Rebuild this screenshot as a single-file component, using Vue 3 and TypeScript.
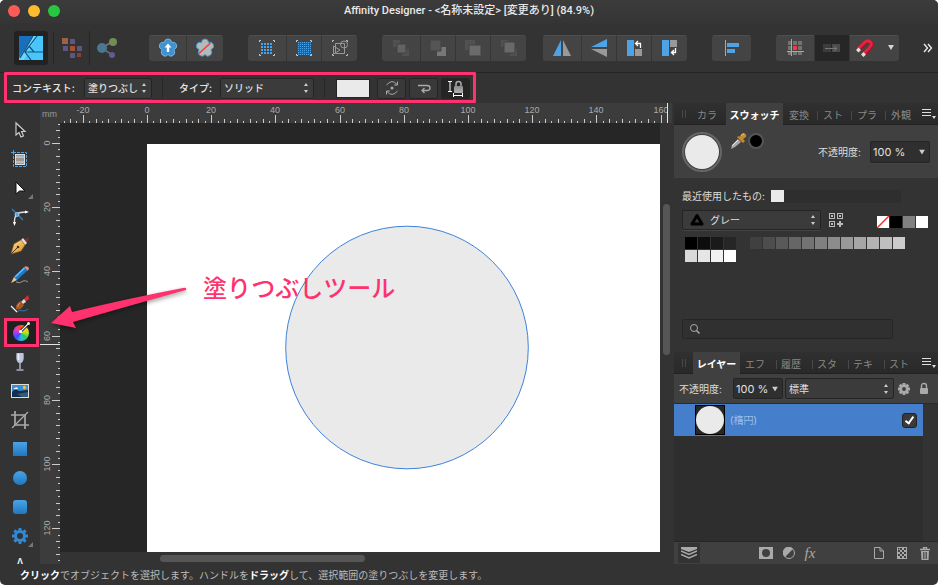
<script setup lang="ts">
import { computed, onBeforeUnmount, onMounted, ref } from 'vue'

interface Tick {
  pos: number
  size: number
  label: string
}

const PIXELS_PER_MM = 3.21

function makeTicks(origin: number, from: number, length: number): Tick[] {
  const ticks: Tick[] = []
  const to = (length - origin) / PIXELS_PER_MM
  for (let mm = from; mm <= to; mm += 2) {
    const major = mm % 20 === 0
    ticks.push({
      pos: Math.round(origin + mm * PIXELS_PER_MM),
      size: major ? 8 : mm % 4 === 0 ? 4 : 2,
      label: major ? String(mm) : '',
    })
  }
  return ticks
}

// The rulers carry only as many ticks as there is room for.
const topRuler = ref<HTMLElement | null>(null)
const leftRuler = ref<HTMLElement | null>(null)
const topLength = ref(0)
const leftLength = ref(0)
const topTicks = computed(() => makeTicks(87, -26, topLength.value - 5))
const leftTicks = computed(() => makeTicks(20, -6, leftLength.value))

let observer: ResizeObserver | undefined
function measure() {
  topLength.value = topRuler.value?.clientWidth ?? 0
  leftLength.value = leftRuler.value?.clientHeight ?? 0
}
onMounted(() => {
  measure()
  observer = new ResizeObserver(measure)
  if (topRuler.value) observer.observe(topRuler.value)
  if (leftRuler.value) observer.observe(leftRuler.value)
})
onBeforeUnmount(() => observer?.disconnect())

const greys = Array.from({ length: 21 }, (_, i) => {
  const v = Math.round(i * 12.75)
  return `rgb(${v}, ${v}, ${v})`
})

const swatchTabs = ['カラ', 'スウォッチ', '変換', 'スト', 'プラ', '外観']
const layerTabs = ['レイヤー', 'エフ', '履歴', 'スタ', 'テキ', 'スト']
const swatchTab = ref('スウォッチ')
const layerTab = ref('レイヤー')
const visible = ref(true)
const query = ref('')
const gearTeeth = [0, 45, 90, 135, 180, 225, 270, 315]
const dots = [0, 1, 2, 3, 4, 5, 6]
</script>

<template>
  <div class="window">
    <svg class="defs" width="0" height="0" aria-hidden="true">
      <defs>
        <linearGradient id="blue" x1="0" y1="0" x2="0" y2="1"><stop offset="0" stop-color="#4ba3e6" /><stop offset="1" stop-color="#1f77c0" /></linearGradient>
        <linearGradient id="gold" x1="0" y1="0" x2="1" y2="1"><stop offset="0" stop-color="#ffe49a" /><stop offset="1" stop-color="#d98a1c" /></linearGradient>
        <linearGradient id="grey" x1="0" y1="0" x2="0" y2="1"><stop offset="0" stop-color="#8a8a8a" /><stop offset="1" stop-color="#b4b4b4" /></linearGradient>
      </defs>
    </svg>

    <header class="titlebar">
      <div class="lights">
        <button class="light close" aria-label="閉じる"></button>
        <button class="light minimise" aria-label="しまう"></button>
        <button class="light zoom" aria-label="拡大"></button>
      </div>
      <h1>Affinity Designer - &lt;名称未設定&gt; [変更あり] (84.9%)</h1>
    </header>

    <nav class="toolbar">
      <div class="personas">
        <button class="persona active" aria-label="Designer">
          <svg width="24" height="24" viewBox="0 0 24 24">
            <rect width="24" height="24" fill="#48c5fb" />
            <path d="M0 0H14L0 22Z" fill="#1a6fbd" />
            <path d="M14 0L0 24H5L18 0Z" fill="#6bd8ff" />
            <path d="M14 0L1 22M18 0L6 16L12 24M6 16H24M10 10L15 16M6 16L10 10" fill="none" stroke="#12547f" stroke-width="1.2" />
          </svg>
        </button>
        <button class="persona pixel" aria-label="Pixel">
          <svg width="20" height="20" viewBox="0 0 20 20">
            <rect width="6" height="6" fill="#9b6245" /><rect x="8" y="1" width="5" height="5" fill="#5d5680" />
            <rect x="1" y="8" width="5" height="5" fill="#5d5680" /><rect x="8" y="8" width="5" height="5" fill="#a3503b" /><rect x="15" y="8" width="5" height="5" fill="#5d5680" />
            <rect x="8" y="15" width="5" height="5" fill="#5d5680" /><rect x="15" y="15" width="4" height="4" fill="#8c3c3f" />
          </svg>
        </button>
        <button class="persona export" aria-label="Export">
          <svg width="20" height="20" viewBox="0 0 20 20">
            <path d="M16 3L5 10L15 17" fill="none" stroke="#777" stroke-width="1.5" />
            <circle cx="5" cy="10" r="5" fill="#4b7791" /><circle cx="16" cy="4" r="4" fill="#738b54" /><circle cx="15" cy="17" r="3" fill="#655894" />
          </svg>
        </button>
      </div>

      <div class="group">
        <button class="tb w37" aria-label="同期">
          <svg width="20" height="20" viewBox="0 0 20 20">
            <path d="M10 1Q13.500 1 13.500 4.500Q17.500 3.500 18.500 7Q19.500 10 16 11.500Q18 15.500 15 17.500Q12 19.500 10 16.500Q8 19.500 5 17.500Q2 15.500 4 11.500Q.5 10 1.500 7Q2.500 3.500 6.500 4.500Q6.500 1 10 1Z" fill="#3f91cf" stroke="#73b5e2" />
            <path d="M10 5.500L13.500 9.500H11.200V14H8.800V9.500H6.500Z" fill="#fff" />
          </svg>
        </button>
        <button class="tb w37" aria-label="既定値">
          <svg width="20" height="20" viewBox="0 0 20 20">
            <path d="M10 1Q13.500 1 13.500 4.500Q17.500 3.500 18.500 7Q19.500 10 16 11.500Q18 15.500 15 17.500Q12 19.500 10 16.500Q8 19.500 5 17.500Q2 15.500 4 11.500Q.5 10 1.500 7Q2.500 3.500 6.500 4.500Q6.500 1 10 1Z" fill="#b5b9bc" stroke="#4795cd" />
            <path d="M4 15.500L15.500 5" stroke="#ee3e3e" stroke-width="1.500" />
          </svg>
        </button>
      </div>

      <div class="group">
        <button class="tb w38" aria-label="グリッド">
          <svg width="18" height="18" viewBox="0 0 18 18">
            <path d="M1.500 3V1.500H3M15 1.500H16.500V3M1.500 15V16.500H3M15 16.500H16.500V15" fill="none" stroke="#ccc" />
            <g fill="#4da3e6"><template v-for="r in 4" :key="r"><rect v-for="c in 4" :key="c" :x="c * 3" :y="r * 3 + 1" width="2" height="2" /></template></g>
          </svg>
        </button>
        <button class="tb w35" aria-label="細かいグリッド">
          <svg width="18" height="18" viewBox="0 0 18 18">
            <path d="M1.500 3V1.500H3M15 1.500H16.500V3M1.500 15V16.500H3M15 16.500H16.500V15" fill="none" stroke="#ccc" />
            <rect x="3" y="3" width="13" height="13" fill="#325d80" />
            <g fill="#4da3e6"><template v-for="r in dots" :key="r"><rect v-for="c in dots" :key="c" :x="c * 2 + 3" :y="r * 2 + 3" width="1" height="1" /></template></g>
          </svg>
        </button>
        <button class="tb w36" aria-label="図形に吸着">
          <svg width="18" height="18" viewBox="0 0 18 18" fill="none">
            <path d="M1.500 3V1.500H3M15 1.500H16.500V3M1.500 15V16.500H3M15 16.500H16.500V15" stroke="#bbb" />
            <path d="M4.500 4.500H13.500V14.500H4.500ZM2.500 7V15L9 11Z" stroke="#999" /><circle cx="13" cy="5.500" r="3.500" stroke="#999" />
          </svg>
        </button>
      </div>

      <div class="group">
        <button class="tb w38" aria-label="最前面へ" disabled><svg width="18" height="18"><rect x="1" y="1" width="7" height="7" fill="#515151" /><rect x="10" y="10" width="7" height="7" fill="#515151" /><path d="M5 5H14V14H5Z" fill="#626262" stroke="#434343" /></svg></button>
        <button class="tb w35" aria-label="前面へ" disabled><svg width="18" height="18"><path d="M8 8H17V17H8Z" fill="#777" /><path d="M1 1H12V12H1Z" fill="#555" stroke="#434343" /></svg></button>
        <button class="tb w35" aria-label="背面へ" disabled><svg width="18" height="18"><rect x="1" y="1" width="10" height="10" fill="#515151" /><path d="M5 6H17V17H5Z" fill="#6b6b6b" stroke="#434343" /></svg></button>
        <button class="tb w36" aria-label="最背面へ" disabled><svg width="18" height="18"><rect x="1" y="1" width="7" height="7" fill="#515151" /><rect x="10" y="10" width="7" height="7" fill="#515151" /><path d="M4 3H15V14H4Z" fill="#696969" stroke="#434343" /></svg></button>
      </div>

      <div class="group close-group">
        <button class="tb w38" aria-label="水平に反転"><svg width="20" height="18"><path d="M9 1V17H1Z" fill="#4da3e6" /><path d="M11 1V17H19Z" fill="#999" /></svg></button>
        <button class="tb w35" aria-label="垂直に反転"><svg width="18" height="20"><path d="M17 1V9H1Z" fill="#4da3e6" /><path d="M17 11V19L1 11Z" fill="#999" /></svg></button>
        <button class="tb w35" aria-label="左に回転"><svg width="16" height="18"><rect x="1" y="1" width="7" height="16" fill="#4da3e6" /><rect x="9" y="10" width="7" height="7" fill="#999" /><path d="M14.500 9V4.500H10M12 2L9.500 4.500L12 7" fill="none" stroke="#fff" stroke-width="1.300" /></svg></button>
        <button class="tb w36" aria-label="右に回転"><svg width="16" height="18"><rect y="1" width="7" height="16" fill="#4da3e6" /><rect x="8" y="1" width="7" height="7" fill="#999" /><path d="M13.500 9V13.500H9.500M12 11L9.500 13.500L12 16" fill="none" stroke="#fff" stroke-width="1.300" /></svg></button>
      </div>

      <div class="group">
        <button class="tb w39" aria-label="整列"><svg width="16" height="18"><path d="M1.500 1V17" stroke="#aaa" /><rect x="3" y="4" width="12" height="4" fill="#4da3e6" /><rect x="3" y="10" width="8" height="4" fill="#4da3e6" /></svg></button>
      </div>

      <div class="group">
        <button class="tb w38" aria-label="スナップグリッド"><svg width="18" height="18"><g fill="#737373"><rect x="2" y="2" width="4" height="4" /><rect x="7" y="2" width="4" height="4" /><rect x="12" y="2" width="4" height="4" /><rect x="2" y="7" width="4" height="4" /><rect x="12" y="7" width="4" height="4" /><rect x="2" y="12" width="4" height="4" /><rect x="7" y="12" width="4" height="4" /><rect x="12" y="12" width="4" height="4" /></g><rect x="7" y="7" width="4" height="4" fill="#f53b3b" /><path d="M5.500 0V17M1 12.500H18" stroke="#aaa" /></svg></button>
        <button class="tb w35 pressed" aria-label="ピクセル整合"><svg width="18" height="10"><rect x="0" y="1" width="8" height="8" fill="#3c3c3c" /><rect x="9" y="1" width="8" height="8" fill="#4b4b4b" /><path d="M2 5.500H13M11 3L14 5.500L11 8" fill="none" stroke="#777" /></svg></button>
        <button class="tb w50 snap" aria-label="スナップ">
          <svg width="20" height="20"><path d="M3 12L10 5Q13 2 15.500 4.500Q18 7 15 10L9 17" fill="none" stroke="#a80f27" stroke-width="4" /><path d="M3 11L9.500 4.500Q13 1.500 15.500 4Q17.500 6.500 14.500 9.500L8.500 16" fill="none" stroke="#e6223e" stroke-width="3" /><path d="M1 12L3.500 9.500L6 12L3.500 14.500ZM6 16.500L8.500 14L11 16.500L8.500 19Z" fill="#ddd" /></svg>
          <svg width="8" height="6"><path d="M1 0H7L4 5Z" fill="#d5d5d5" /></svg>
        </button>
      </div>
      <button class="overflow" aria-label="その他"><svg width="10" height="10"><path d="M1 1L4.500 5L1 9M5 1L8.500 5L5 9" fill="none" stroke="#eee" stroke-width="1.300" /></svg></button>
    </nav>

    <section class="context">
      <label for="ctx">コンテキスト:</label>
      <div class="pick pick-ctx">
        <select id="ctx"><option>塗りつぶし</option><option>境界線</option></select>
        <svg class="updown" width="6" height="10"><path d="M1 3L3 0L5 3ZM1 7L3 10L5 7Z" fill="#ccc" /></svg>
      </div>
      <i class="sep"></i>
      <label for="type" class="type-label">タイプ:</label>
      <div class="pick pick-type">
        <select id="type"><option>ソリッド</option><option>線形</option></select>
        <svg class="updown" width="6" height="10"><path d="M1 3L3 0L5 3ZM1 7L3 10L5 7Z" fill="#ccc" /></svg>
      </div>
      <i class="sep"></i>
      <button class="fill" aria-label="塗りつぶしの色"></button>
      <button class="ctx-btn" aria-label="回転"><svg width="16" height="16" fill="none" stroke="#aaa"><path d="M2.500 5Q8 -1.500 13 4.500M13.500 1.500V5H10M13.500 11Q8 17.500 3 11.500M2.500 14.500V11H6" /><circle cx="8" cy="8" r="1.500" fill="#aaa" stroke="none" /></svg></button>
      <button class="ctx-btn" aria-label="反転"><svg width="16" height="14" fill="none" stroke="#aaa" stroke-width="1.300"><path d="M2 4.500H11Q14 4.500 14 7Q14 9.500 11 9.500H6M8.500 7L6 9.500L8.500 12" /></svg></button>
      <button class="ctx-btn dark" aria-label="塗りつぶしを固定"><svg width="17" height="18"><path d="M1 2.500H5M3 2.500V12.500M1 12.500H5M6 16.500H16M6.500 14V18M15.500 14V18" fill="none" stroke="#fff" /><rect x="7" y="7" width="9" height="7" rx="1" fill="url(#grey)" /><path d="M9 7V5Q9 2.500 11.500 2.500Q14 2.500 14 5V7" fill="none" stroke="#aaa" stroke-width="1.500" /></svg></button>
      <div class="context-frame"></div>
    </section>

    <main class="main">
      <aside class="tools">
        <button class="tool" aria-label="移動"><svg width="20" height="20"><path d="M6 3V15L9 12.500L11 17L13.500 16L11.500 11.500H15Z" fill="#222" stroke="#ccc" stroke-width="1.200" /></svg></button>
        <button class="tool" aria-label="アートボード"><svg width="20" height="20"><path d="M3 3.500H16.500V17.500H3.500V3" fill="none" stroke="#4da3e6" stroke-dasharray="3 1" /><path d="M1 3.500H6M3.500 1V6" stroke="#4da3e6" /><rect x="5.500" y="5.500" width="9" height="10" fill="#999" stroke="#ddd" /><path d="M6 8H14M6 13H14" stroke="#ddd" /></svg></button>
        <button class="tool more" aria-label="ノード"><svg width="20" height="20"><path d="M6 4V16L9.500 13H15Z" fill="#fff" stroke="#111" /></svg></button>
        <button class="tool" aria-label="コーナー"><svg width="20" height="20"><path d="M2 2L13 13" stroke="#267bb9" stroke-width="1.500" /><path d="M17 5Q9 5 7 7Q4 10 4.500 17" fill="none" stroke="#ddd" stroke-width="1.300" /><path d="M15 3.500L19 5L15 6.500ZM3 15L4.500 19L6 15Z" fill="#fff" /><circle cx="7" cy="7.500" r="2" fill="#4da3e6" stroke="#c9e4f7" stroke-width=".7" /></svg></button>
        <button class="tool" aria-label="ペン"><svg width="20" height="20"><path d="M14 4L18 1L19 4L16 7Z" fill="#7c3022" /><path d="M11 4L13 2L17 7L15 9Z" fill="#ddd" /><path d="M11 4L15 9L11 15L1 18L4 8Z" fill="url(#gold)" stroke="#a86514" stroke-width=".5" /><path d="M1 18L8 11" stroke="#503616" /><circle cx="8" cy="11" r="1.300" fill="#422d17" /></svg></button>
        <button class="tool" aria-label="鉛筆"><svg width="20" height="20"><path d="M14 2Q17 0 19 3Q19 5 17 6Z" fill="#eb8b78" /><path d="M14 2L17.500 5.500L7 15L4 12Z" fill="#1b79ce" /><path d="M14.500 3L5 12" stroke="#74bdf5" stroke-width="1.500" /><path d="M4 12L7 15L1 18Z" fill="#e8c692" /><path d="M6 17Q10 19 13 16Q16 15 18 17" fill="none" stroke="#999" /></svg></button>
        <button class="tool" aria-label="ブラシ"><svg width="20" height="20"><path d="M13 6L18 1L19 5L15 8Z" fill="#e82732" /><path d="M11 8L14 5L16 8L13 10Z" fill="#ddd" /><path d="M10 7L14 11Q10 17 6 15Q5 11 10 7Z" fill="#a65627" /><path d="M10 9Q7 11 8 13" fill="none" stroke="#e59852" /><path d="M1 12L7 18" stroke="#eee" stroke-width="1.200" /><path d="M7 18Q10 15 13 17Q16 17 18 15" fill="none" stroke="#247ab4" /></svg></button>
        <button class="tool current" aria-label="塗りつぶし">
          <span class="wheel"></span>
          <svg class="wheel-handle" width="20" height="20"><path d="M10 10L18 2" stroke="#111" stroke-width="3" /><path d="M9.500 10.500L18 2" stroke="#eee" stroke-width="1.200" /><circle cx="9.500" cy="10.500" r="1.500" fill="#fff" /><circle cx="17.500" cy="2.500" r="1.500" fill="#eee" /></svg>
        </button>
        <button class="tool" aria-label="透明"><svg width="20" height="20"><path d="M6.500 1H13.500Q14.500 8 12 10.500Q10 12 8 10.500Q5.500 8 6.500 1Z" fill="#bdc4dc" /><path d="M8.500 2V8" stroke="#eef1ff" stroke-width="1.500" /><path d="M10 10V17M6.500 18H13.500" stroke="#aab2ca" stroke-width="1.500" /></svg></button>
        <button class="tool" aria-label="画像配置"><svg width="20" height="20"><rect x="1.500" y="3.500" width="17" height="13" fill="#398ed4" stroke="#ddd" /><path d="M2 11Q5 7 9 10L18 9V16H2Z" fill="#142e4d" /><path d="M3 8H8Q7 5 5 7Z" fill="#fff" /><circle cx="14.500" cy="6.500" r="1.700" fill="#ffbd30" /><path d="M7 13L18 11V16H12Z" fill="#355d7b" /></svg></button>
        <button class="tool" aria-label="切り抜き"><svg width="20" height="20" fill="none" stroke="#aaa" stroke-width="1.700"><path d="M5 1V15H19M1 5H15V19" /><path d="M2 18L18 2" stroke-width="1.300" /></svg></button>
        <button class="tool" aria-label="長方形"><svg width="20" height="20"><rect x="3" y="3" width="14" height="14" fill="url(#blue)" /></svg></button>
        <button class="tool" aria-label="楕円"><svg width="20" height="20"><circle cx="10" cy="10" r="7" fill="url(#blue)" /></svg></button>
        <button class="tool" aria-label="角丸長方形"><svg width="20" height="20"><rect x="3" y="3" width="14" height="14" rx="3" fill="url(#blue)" /></svg></button>
        <button class="tool more" aria-label="歯車"><svg width="20" height="20"><g fill="#3289d3"><rect v-for="a in gearTeeth" :key="a" x="8.500" y="2" width="3" height="4" :transform="`rotate(${a} 10 10)`" /></g><circle cx="10" cy="10" r="4.500" fill="none" stroke="#3289d3" stroke-width="3" /></svg></button>
        <button class="tool text-tool" aria-label="テキスト">A</button>
      </aside>

      <section class="workspace">
        <div class="unit">mm</div>
        <div ref="topRuler" class="ruler-top">
          <svg class="scale" height="20">
            <template v-for="t in topTicks" :key="t.pos">
              <rect :x="t.pos" :y="20 - t.size" width="1" :height="t.size" fill="#ccc" />
              <text v-if="t.label" :x="t.pos" y="10" text-anchor="middle">{{ t.label }}</text>
            </template>
          </svg>
        </div>
        <div ref="leftRuler" class="ruler-left">
          <svg class="scale" width="20">
            <template v-for="t in leftTicks" :key="t.pos">
              <rect :x="20 - t.size" :y="t.pos" :width="t.size" height="1" fill="#ccc" />
              <text v-if="t.label" x="0" y="0" text-anchor="middle" :transform="`translate(10 ${t.pos}) rotate(-90)`">{{ t.label }}</text>
            </template>
            <rect y="221" width="20" height="1" fill="#e5e5e5" />
          </svg>
        </div>
        <div class="canvas">
          <div class="artboard">
            <svg width="100%" height="100%"><circle cx="260" cy="203.500" r="121.300" fill="#eaeaea" stroke="#3d82dc" /></svg>
          </div>
        </div>
        <div class="vscroll"><div class="vthumb"></div></div>
        <div class="hscroll"><div class="hthumb"></div></div>
      </section>

      <aside class="panels">
        <div class="tabs swatch-tabs">
          <span class="grip"></span>
          <button v-for="t in swatchTabs" :key="t" class="tab" :class="{ on: t === swatchTab }" @click="swatchTab = t">{{ t }}</button>
          <button class="menu" aria-label="メニュー"><svg width="14" height="12"><path d="M0 1.500H9M0 4.500H9M0 7.500H9" stroke="#ddd" /><path d="M10 8H14L12 11Z" fill="#ddd" /></svg></button>
        </div>

        <div class="swatch-head">
          <button class="big-swatch" aria-label="塗り"></button>
          <svg class="dropper" width="18" height="18"><path d="M2 17L3 13L9 7L12 10L6 15Z" fill="#aaa" /><path d="M3 14L9 8" stroke="#eee" /><path d="M8 5L14 11L16 9L14 7L17 5Q18 2 15 1Q12 1 11 5L10 4Z" fill="#c78a2c" /><path d="M12 4Q13 2 15 2" fill="none" stroke="#f3c66c" /></svg>
          <button class="mini-swatch" aria-label="直前の色"></button>
          <label for="opacity">不透明度:</label>
          <div class="pick dark-pick pick-op">
            <select id="opacity"><option>100 %</option><option>50 %</option></select>
            <svg class="down" width="6" height="5"><path d="M0 0H6L3 5Z" fill="#ccc" /></svg>
          </div>
        </div>

        <div class="swatch-body">
          <div class="recent"><span>最近使用したもの:</span><div class="trough"><button aria-label="最近の色"></button></div></div>
          <div class="palette-row">
            <div class="pick pick-palette">
              <svg class="tri" width="14" height="13"><path d="M7 2L12 10.500H2Z" fill="none" stroke="#000" stroke-width="3" stroke-linejoin="round" /></svg>
              <select aria-label="パレット"><option>グレー</option><option>カラー</option></select>
              <svg class="updown" width="6" height="10"><path d="M1 3L3 0L5 3ZM1 7L3 10L5 7Z" fill="#ccc" /></svg>
            </div>
            <button class="add" aria-label="パレットに追加"><svg width="15" height="15" fill="none" stroke="#bbb"><rect x=".5" y=".5" width="5" height="5" /><rect x="8.500" y=".5" width="5" height="5" /><rect x=".5" y="8.500" width="5" height="5" /><path d="M2 3H4M10 3H12M2 11H4" stroke-width="2" /><path d="M8 11H14M11 8V14" stroke-width="2" /></svg></button>
            <div class="basics">
              <button class="none" aria-label="なし"><svg width="12" height="12"><path d="M0 12L12 0" stroke="#f03030" stroke-width="1.500" /></svg></button>
              <button class="black" aria-label="黒"></button><button class="mid" aria-label="グレー"></button><button class="white" aria-label="白"></button>
            </div>
          </div>
          <div class="greys"><button v-for="g in greys" :key="g" :style="{ background: g }" :aria-label="g"></button></div>
          <div class="search">
            <svg width="10" height="10" fill="none" stroke="#aaa"><circle cx="4" cy="4" r="3.500" /><path d="M6.500 6.500L9.500 9.500" stroke-width="1.500" /></svg>
            <input v-model="query" type="text" aria-label="検索" />
          </div>
        </div>

        <div class="tabs layer-tabs">
          <span class="grip"></span>
          <button v-for="t in layerTabs" :key="t" class="tab" :class="{ on: t === layerTab }" @click="layerTab = t">{{ t }}</button>
          <button class="menu" aria-label="メニュー"><svg width="14" height="12"><path d="M0 1.500H9M0 4.500H9M0 7.500H9" stroke="#ddd" /><path d="M10 8H14L12 11Z" fill="#ddd" /></svg></button>
        </div>

        <div class="layer-head">
          <label for="layer-op">不透明度:</label>
          <div class="pick dark-pick pick-lop">
            <select id="layer-op"><option>100 %</option><option>50 %</option></select>
            <svg class="down" width="6" height="5"><path d="M0 0H6L3 5Z" fill="#ccc" /></svg>
          </div>
          <div class="pick pick-blend">
            <select aria-label="描画モード"><option>標準</option><option>乗算</option></select>
            <svg class="updown" width="6" height="10"><path d="M1 3L3 0L5 3ZM1 7L3 10L5 7Z" fill="#ccc" /></svg>
          </div>
          <button class="plain" aria-label="設定"><svg width="14" height="14"><g fill="#aaa"><rect v-for="a in gearTeeth" :key="a" x="5.500" y="1" width="3" height="3" :transform="`rotate(${a} 7 7)`" /></g><circle cx="7" cy="7" r="3.200" fill="none" stroke="#aaa" stroke-width="2.500" /></svg></button>
          <button class="plain" aria-label="ロック"><svg width="10" height="13"><rect x="1" y="6" width="8" height="6" rx="1" fill="#aaa" /><path d="M2.500 6V4Q2.500 1.500 5 1.500Q7.500 1.500 7.500 4V6" fill="none" stroke="#aaa" stroke-width="1.400" /></svg></button>
        </div>

        <div class="layer-list">
          <div class="layer">
            <svg class="thumb" width="30" height="30"><rect x=".5" y=".5" width="29" height="29" fill="#272727" stroke="#000" /><circle cx="15" cy="15" r="14" fill="#eaeaea" /></svg>
            <label for="visible">(楕円)</label>
            <input id="visible" v-model="visible" type="checkbox" />
          </div>
        </div>

        <div class="layer-foot">
          <button class="stack" aria-label="すべてのレイヤー"><svg width="16" height="14"><path d="M0 1H16V3L8 6L0 3Z" fill="#aaa" /><path d="M0 5L8 8.500L16 5M0 8.500L8 12L16 8.500" fill="none" stroke="#aaa" stroke-width="1.500" /></svg></button>
          <div class="foot-group effects">
            <button aria-label="マスク"><svg width="14" height="12"><path d="M0 0H14V12H0ZM7 2A4 4 0 1 0 7 10A4 4 0 1 0 7 2Z" fill="#aaa" fill-rule="evenodd" /></svg></button>
            <button aria-label="調整"><svg width="12" height="12"><circle cx="6" cy="6" r="5.500" fill="none" stroke="#aaa" /><path d="M10 2A5.700 5.700 0 1 0 2 10Z" fill="#aaa" /></svg></button>
            <button class="fx" aria-label="効果">fx</button>
          </div>
          <div class="foot-group">
            <button aria-label="新規レイヤー"><svg width="10" height="12"><path d="M.5 .5H6L9.500 4V11.500H.5ZM6 .5V4H9.500" fill="none" stroke="#aaa" /></svg></button>
            <button aria-label="新規ピクセルレイヤー"><svg width="10" height="12"><rect x=".5" y=".5" width="9" height="11" fill="none" stroke="#aaa" /><path d="M3 1V3H1M5 1H7V3H5ZM3 3H5V5H3ZM7 3H9V5H7ZM1 5H3V7H1ZM5 5H7V7H5ZM3 7H5V9H3ZM7 7H9V9H7ZM1 9H3V11H1ZM5 9H7V11H5Z" fill="#aaa" /></svg></button>
            <button aria-label="削除"><svg width="10" height="13"><path d="M0 2.500H10M3.500 2V.5H6.500V2" fill="none" stroke="#aaa" stroke-width="1.300" /><path d="M1 4H9L8.500 13H1.500Z" fill="#aaa" /><path d="M3.500 5V12M5 5V12M6.500 5V12" stroke="#404040" stroke-width=".8" /></svg></button>
          </div>
        </div>
      </aside>
    </main>

    <footer class="status"><b>クリック</b>でオブジェクトを選択します。ハンドルを<b>ドラッグ</b>して、選択範囲の塗りつぶしを変更します。</footer>

    <svg class="arrow" width="150" height="54" viewBox="45 280 150 54"><path d="M51 323L70 306L72 312Q130 298 183 288Q187 287 186 290Q146 301 73 322L76 328Z" fill="#ff316f" /></svg>
    <p class="callout">塗りつぶしツール</p>
  </div>
</template>

<style>
body {
  margin: 0;
  background: #fff;
}
</style>

<style scoped>
* {
  box-sizing: border-box;
}
.window {
  position: relative;
  display: flex;
  flex-direction: column;
  height: 100vh;
  overflow: hidden;
  border-radius: 5px;
  background: #333;
  color: #ddd;
  font: 10px/14px Inter, "Noto Sans CJK JP", sans-serif;
}
.defs {
  position: absolute;
}
svg {
  display: block;
  flex: none;
}
button {
  display: flex;
  flex: none;
  align-items: center;
  justify-content: center;
  padding: 0;
  border: 0;
  background: none;
  color: inherit;
  font: inherit;
}
.titlebar {
  display: grid;
  grid-template-columns: 1fr auto 1fr;
  flex: none;
  height: 23px;
  background: linear-gradient(#3b3b3b, #353535);
}
.lights {
  display: flex;
  gap: 8px;
  padding: 5px 8px;
}
.light {
  width: 12px;
  height: 12px;
  border-radius: 50%;
}
.close { background: #fc5b57; }
.minimise { background: #fdbc2e; }
.zoom { background: #27c840; }
h1 {
  margin: 0;
  color: #e8e8e8;
  font: 500 11px/21px Roboto, "Noto Sans CJK JP", sans-serif;
}
.toolbar {
  display: flex;
  flex: none;
  align-items: center;
  height: 50px;
  padding: 0 5px 0 14px;
  border-bottom: 1px solid #252525;
}
.personas {
  display: flex;
  flex: none;
  align-items: center;
  margin-right: 25px;
}
.persona {
  height: 34px;
}
.persona.active {
  width: 34px;
  margin-right: 5px;
  border-radius: 3px;
  background: #222;
}
.persona.pixel {
  width: 37px;
  border: solid #262626;
  border-width: 0 1px;
}
.persona.export {
  width: 34px;
}
.group {
  display: flex;
  flex: none;
  margin-right: 25px;
  border-radius: 3px;
  background: #444;
  overflow: hidden;
}
.group:has(+ .close-group) {
  margin-right: 17px;
}
.tb {
  height: 26px;
  border-top: 1px solid #4d4d4d;
}
.tb + .tb {
  border-left: 1px solid #363636;
}
.w35 { width: 35px; }
.w36 { width: 36px; }
.w37 { width: 37px; }
.w38 { width: 38px; }
.w39 { width: 39px; }
.w50 { width: 50px; }
.pressed {
  border-top-color: #262626;
  background: #262626;
}
.snap {
  gap: 12px;
}
.group:last-of-type {
  margin-right: 0;
}
.overflow {
  margin-left: auto;
}
.context {
  position: relative;
  display: flex;
  flex: none;
  align-items: center;
  height: 30px;
  padding-left: 12px;
  color: #e5e5e5;
  font-weight: 500;
}
.context > label:first-child {
  width: 72px;
}
.context-frame {
  position: absolute;
  top: -1px;
  left: 4px;
  width: 472px;
  height: 31px;
  border: 3px solid #ff316f;
  border-radius: 1px;
  pointer-events: none;
}
.sep {
  width: 1px;
  height: 20px;
  margin: 0 10px;
  background: #272727;
}
.type-label {
  width: 41px;
  margin-left: 6px;
}
.pick {
  position: relative;
  flex: none;
  height: 21px;
}
select {
  width: 100%;
  height: 100%;
  padding: 0 3px;
  border: 1px solid #242424;
  border-radius: 2px;
  appearance: none;
  background: #3b3b3b;
  box-shadow: 0 1px 0 #454545;
  color: #e0e0e0;
  font: inherit;
}
.updown,
.down,
.tri {
  position: absolute;
  top: 50%;
  right: 5px;
  transform: translateY(-50%);
  pointer-events: none;
}
.pick-ctx { width: 68px; }
.pick-type { width: 94px; }
.dark-pick select {
  padding: 0 2px;
  background: #2f2f2f;
  font-size: 11px;
}
.fill {
  width: 34px;
  height: 19px;
  margin: 0 7px 0 1px;
  border: 1px solid #242424;
  background: #eaeaea;
}
.ctx-btn {
  width: 29px;
  height: 21px;
  margin-right: 3px;
  border: 1px solid #252525;
  border-radius: 2px;
  background: #393939;
}
.ctx-btn.dark { background: #252525; }
.main {
  display: flex;
  flex: 1;
  min-height: 0;
}
.tools {
  flex: none;
  width: 40px;
  padding-top: 12px;
  overflow: hidden;
}
.tool {
  position: relative;
  width: 40px;
  height: 29px;
}
.more::after {
  position: absolute;
  right: 7px;
  bottom: 3px;
  border: solid transparent;
  border-width: 5px 0 0 5px;
  border-right: 5px solid #777;
  border-top: 5px solid transparent;
  border-left: 0;
  content: "";
}
.current {
  width: 35px;
  height: 29px;
  margin-left: 4px;
  border: 3px solid #ff316f;
  background: #202020;
}
.wheel {
  width: 16px;
  height: 16px;
  margin-right: 2px;
  border-radius: 50%;
  background: conic-gradient(#ff4a25, #ffd023, #a4e928, #27c962, #30b8ec, #3850ff, #a03bf2, #f13dac, #ff4a25);
}
.wheel-handle {
  position: absolute;
  top: 0;
  left: 4px;
}
.text-tool {
  align-items: flex-start;
  color: #eee;
  font-size: 14px;
  line-height: 28px;
}
.workspace {
  display: grid;
  flex: 1;
  grid-template: 20px 1fr 12px / 20px 1fr 14px;
  min-width: 0;
}
.unit,
.ruler-top,
.ruler-left {
  background: #3c3c3c;
}
.unit {
  padding-left: 2px;
  color: #999;
  font: 9px/22px "Liberation Sans", sans-serif;
}
.ruler-top {
  grid-column: 2 / 4;
  min-width: 0;
  margin-right: 2px;
  padding-right: 4px;
}
.ruler-top .scale {
  width: 100%;
  border-right: 1px solid #e5e5e5;
}
.ruler-left {
  grid-row: 2 / 4;
  min-height: 0;
  overflow: hidden;
}
.ruler-left .scale {
  height: 100%;
}
.scale text {
  fill: #aaa;
  font: 9px "Liberation Sans", sans-serif;
}
.canvas {
  min-width: 0;
  min-height: 0;
  padding: 21px 0 0 87px;
  background: #262626;
}
.artboard {
  height: 100%;
  background: #fff;
}
.vscroll {
  padding: 81px 4px 0 3px;
}
.vthumb {
  height: 151px;
  border-radius: 4px;
  background: #565656;
}
.hscroll {
  grid-column: 2 / 4;
  padding: 3px 0 0 100px;
}
.hthumb {
  width: 205px;
  height: 7px;
  border-radius: 4px;
  background: #565656;
}
.panels {
  display: flex;
  flex: none;
  flex-direction: column;
  width: 264px;
}
.tabs {
  display: flex;
  flex: none;
  align-items: stretch;
  height: 22px;
  border-bottom: 1px solid #212121;
  background: linear-gradient(#303030, #292929);
  color: #888;
}
.grip {
  width: 4px;
  height: 8px;
  margin: 7px 8px 0 8px;
  border: solid #484848;
  border-width: 0 1px;
}
.tab {
  position: relative;
  justify-content: flex-start;
  width: 34px;
  height: 22px;
  padding: 2px 0 0 6px;
}
.tab + .tab:not(.on)::before {
  position: absolute;
  left: 0;
  width: 1px;
  height: 9px;
  background: #484848;
  content: "";
}
.tab.on + .tab::before {
  display: none;
}
.tab.on {
  justify-content: center;
  padding: 2px 0 0;
  background: #404040;
  color: #fff;
  font-weight: 700;
}
.swatch-tabs .tab:first-of-type {
  width: 32px;
  padding-left: 3px;
}
.swatch-tabs .tab.on { width: 57px; }
.layer-tabs .tab { width: 36px; padding-left: 5px; }
.layer-tabs .tab.on { width: 47px; padding-left: 0; }
.layer-tabs .grip { margin-right: 7px; }
.menu {
  margin: 0 2px 0 auto;
}
.swatch-head {
  display: flex;
  flex: none;
  align-items: center;
  height: 53px;
  padding: 0 8px;
  background: #404040;
}
.big-swatch {
  width: 40px;
  height: 40px;
  border: 2px solid #666;
  border-radius: 50%;
  background: #eaeaea;
  background-clip: content-box;
  padding: 1px;
}
.dropper {
  margin: 0 0 22px 7px;
}
.mini-swatch {
  width: 16px;
  height: 16px;
  margin: 0 0 21px 1px;
  border: 2px solid #555;
  border-radius: 50%;
  background: #000;
}
.swatch-head label {
  margin-left: auto;
}
.pick-op {
  width: 60px;
  height: 22px;
  margin-left: 9px;
}
.swatch-body {
  display: flex;
  flex: none;
  flex-direction: column;
  padding: 11px 8px 13px;
}
.recent {
  display: flex;
  align-items: center;
  height: 14px;
}
.recent span {
  width: 89px;
}
.trough {
  width: 130px;
  height: 13px;
  background: #2e2e2e;
}
.trough button {
  width: 13px;
  height: 12px;
  background: #eaeaea;
}
.palette-row {
  display: flex;
  align-items: center;
  margin-top: 7px;
}
.pick-palette {
  width: 139px;
  height: 20px;
}
.pick-palette select {
  padding-left: 27px;
}
.tri {
  right: auto;
  left: 8px;
}
.add {
  margin-left: 8px;
}
.basics {
  display: flex;
  gap: 1px;
  margin: 4px 2px 0 auto;
}
.basics button,
.greys button {
  width: 12px;
  height: 12px;
}
.none { background: #fff; }
.black { background: #000; }
.mid { background: #808080; }
.white { background: #fff; }
.greys {
  display: flex;
  flex-wrap: wrap;
  gap: 1px;
  padding: 7px 24px 0 3px;
}
.search {
  display: flex;
  align-items: center;
  width: 211px;
  height: 20px;
  margin-top: 57px;
  padding-left: 7px;
  border: 1px solid #262626;
  border-radius: 2px;
  background: #303030;
}
.search input {
  flex: 1;
  min-width: 0;
  border: 0;
  outline: 0;
  background: none;
  color: #ddd;
  font: inherit;
}
.layer-head {
  display: flex;
  flex: none;
  align-items: center;
  height: 30px;
  padding-left: 5px;
  border-bottom: 1px solid #2a2a2a;
  background: #404040;
}
.pick-lop {
  width: 50px;
  margin-left: auto;
}
.pick-blend {
  width: 109px;
  margin-left: 2px;
}
.layer-head .plain {
  margin-left: 3px;
}
.layer-head .plain:last-child {
  margin: 0 9px 0 8px;
}
.layer-list {
  flex: 1;
  min-height: 0;
  margin-right: 15px;
  background: #2e2e2e;
}
.layer {
  display: flex;
  align-items: center;
  gap: 5px;
  height: 32px;
  padding: 0 6px 0 21px;
  background: #457fcc;
}
.layer label {
  flex: 1;
  color: #bcd5f3;
  font-weight: 300;
}
.layer input {
  width: 15px;
  height: 15px;
  margin: 0;
  border: 1px solid #222;
  border-radius: 3px;
  appearance: none;
  background: #3a3a3a;
}
.layer input:checked::after {
  display: block;
  width: 3px;
  height: 7px;
  margin: 1px 0 0 4px;
  border: solid #fff;
  border-width: 0 2px 2px 0;
  box-sizing: content-box;
  transform: rotate(35deg);
  content: "";
}
.layer-foot {
  display: flex;
  flex: none;
  align-items: center;
  justify-content: space-between;
  height: 23px;
  padding: 0 8px 0 4px;
  border-top: 1px solid #262626;
  background: #404040;
}
.stack {
  width: 22px;
  height: 20px;
  background: #333;
}
.foot-group {
  display: flex;
  gap: 13px;
  align-items: center;
}
.effects {
  gap: 10px;
}
.fx {
  color: #aaa;
  font: italic 15px/18px "Liberation Serif", serif;
}
.status {
  flex: none;
  height: 21px;
  padding: 0 20px;
  color: #bbb;
  line-height: 22px;
  white-space: nowrap;
}
.status b {
  color: #fff;
}
.arrow {
  position: absolute;
  top: 280px;
  left: 45px;
  filter: drop-shadow(0 2px 2px rgba(0, 0, 0, 0.4));
}
.callout {
  position: absolute;
  top: 273px;
  left: 203px;
  margin: 0;
  color: #ff316f;
  font-size: 24px;
  font-weight: 500;
  line-height: 32px;
}
</style>
